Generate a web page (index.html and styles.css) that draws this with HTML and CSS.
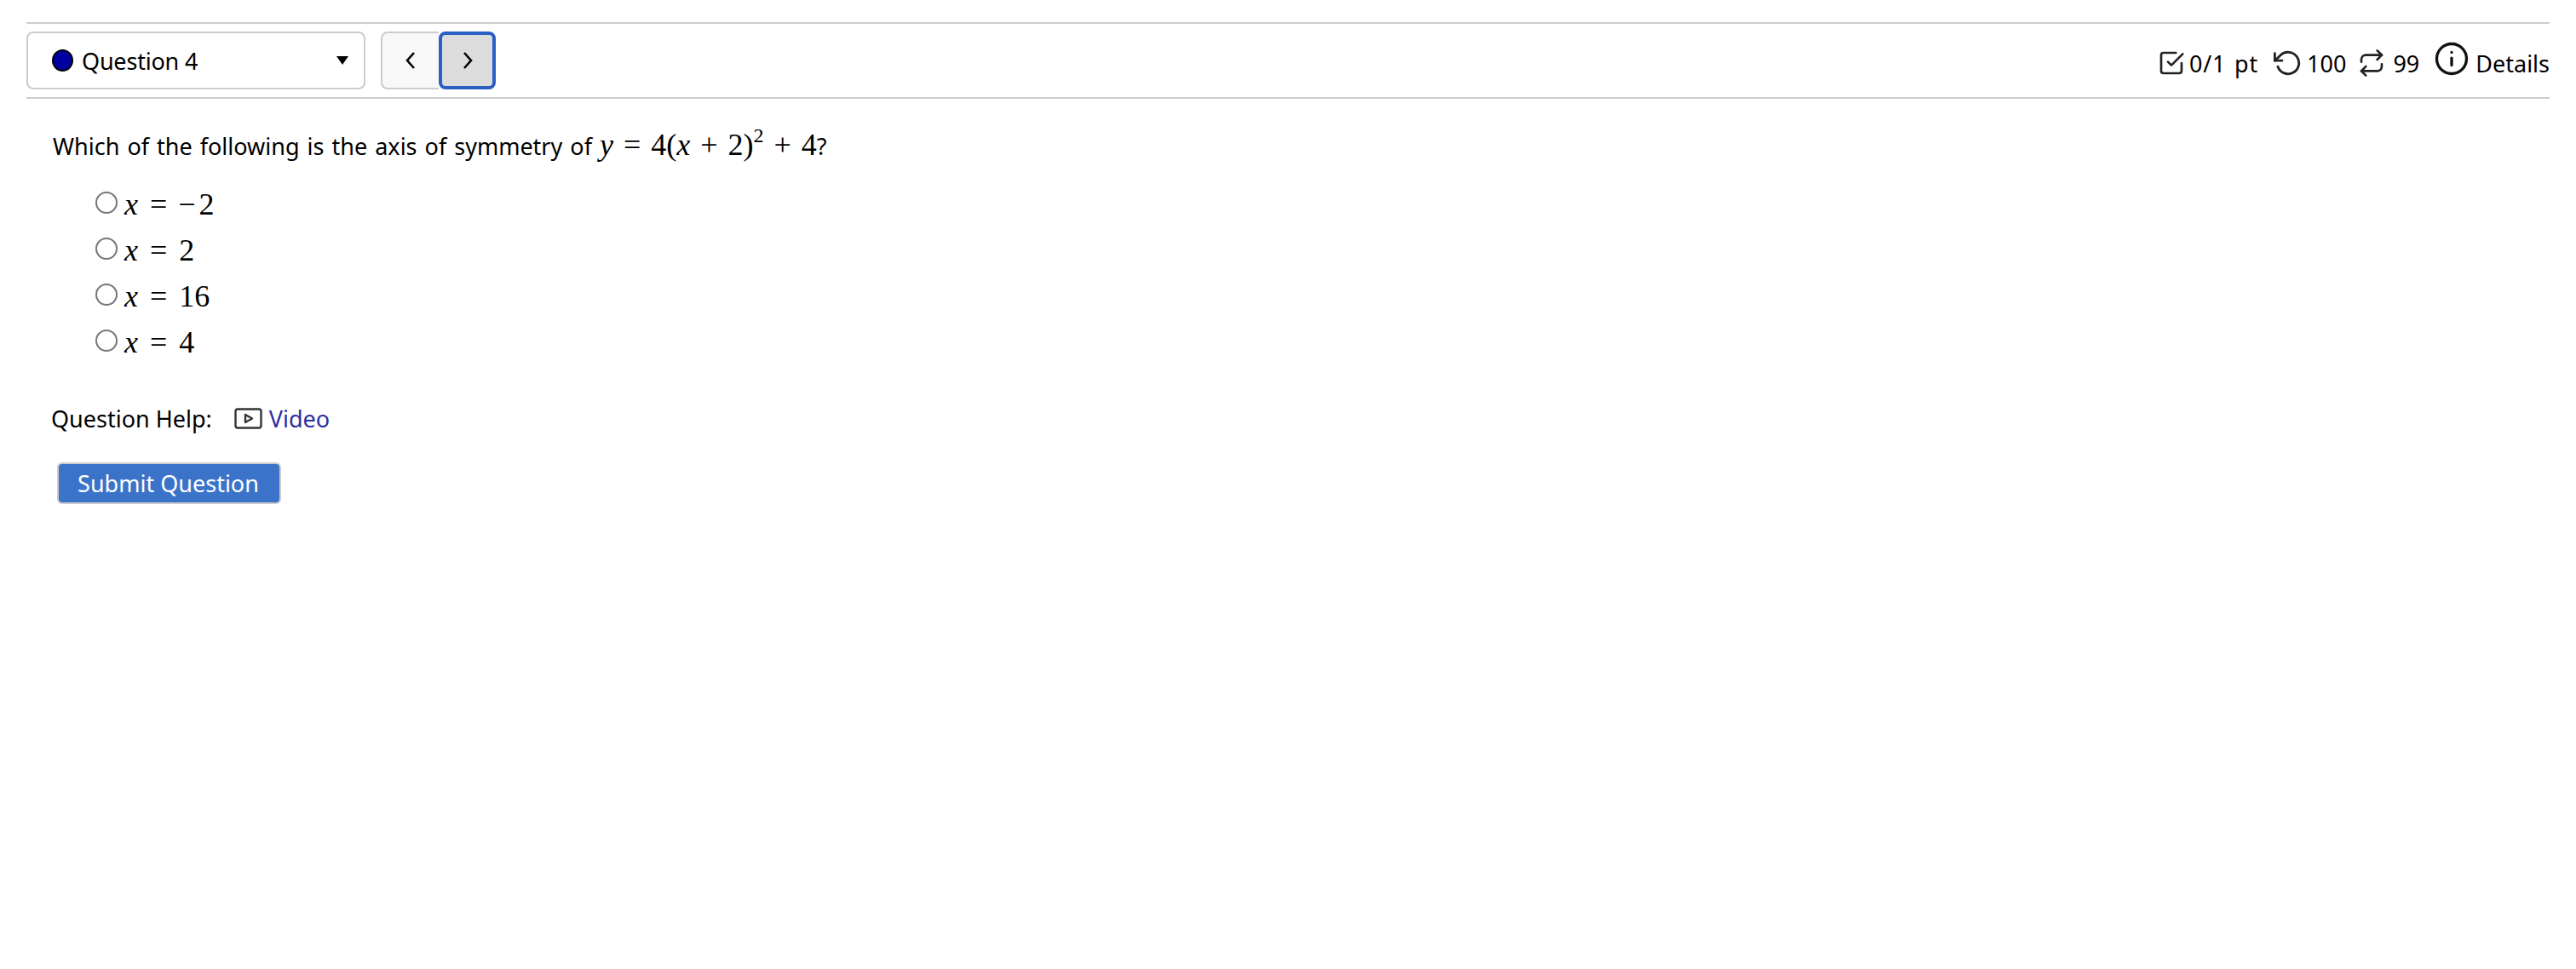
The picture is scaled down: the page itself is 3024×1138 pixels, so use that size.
FILE: index.html
```html
<!DOCTYPE html>
<html lang="en">
<head>
    <meta charset="UTF-8">
    <title>Question 4</title>
    <link rel="stylesheet" href="styles.css">
</head>
<body>
    <div class="question-nav">
        <div class="nav-left">
            <div class="question-select">
                <span class="status-dot"></span>
                <span class="select-label">Question 4</span>
                <span class="select-caret"></span>
            </div>
            <div class="nav-buttons">
                <button class="nav-btn nav-prev">
                    <svg width="16" height="24" viewBox="0 0 16 24"><path d="M12 3 L4 12 L12 21" fill="none" stroke="#000" stroke-width="2.6"/></svg>
                </button>
                <button class="nav-btn nav-next">
                    <svg width="16" height="24" viewBox="0 0 16 24"><path d="M4 3 L12 12 L4 21" fill="none" stroke="#000" stroke-width="2.6"/></svg>
                </button>
            </div>
        </div>
        <div class="nav-info">
            <svg class="icon" width="32" height="32" viewBox="0 0 24 24" fill="none" stroke="#222" stroke-width="2" stroke-linecap="round" stroke-linejoin="round">
                <polyline points="9 11 12 14 22 4"/>
                <path d="M21 12v7a2 2 0 0 1-2 2H5a2 2 0 0 1-2-2V5a2 2 0 0 1 2-2h11"/>
            </svg>
            <span class="info-text info-pts">0/1 pt</span>
            <svg class="icon" width="34" height="34" viewBox="0 0 24 24" fill="none" stroke="#222" stroke-width="2" stroke-linecap="round" stroke-linejoin="round">
                <polyline points="1 4 1 10 7 10"/>
                <path d="M3.51 15a9 9 0 1 0 2.13-9.36L1 10"/>
            </svg>
            <span class="info-text info-tries">100</span>
            <svg class="icon" width="32" height="34" viewBox="0 0 24 24" fill="none" stroke="#222" stroke-width="2" stroke-linecap="round" stroke-linejoin="round">
                <polyline points="17 1 21 5 17 9"/>
                <path d="M3 11V9a4 4 0 0 1 4-4h14"/>
                <polyline points="7 23 3 19 7 15"/>
                <path d="M21 13v2a4 4 0 0 1-4 4H3"/>
            </svg>
            <span class="info-text info-retries">99</span>
            <svg class="icon-info" width="40" height="40" viewBox="0 0 24 24" fill="none" stroke="#111" stroke-width="2" stroke-linecap="round">
                <circle cx="12" cy="12" r="10.5"/>
                <line x1="12" y1="16.5" x2="12" y2="11.5"/>
                <line x1="12" y1="7.5" x2="12.01" y2="7.5"/>
            </svg>
            <span class="info-text">Details</span>
        </div>
    </div>

    <div class="question-body">
        <p class="question-text">Which of the following is the axis of symmetry of
            <span class="math"><i>y</i> <span class="op">=</span> 4(<i>x</i> <span class="op">+</span> 2)<sup>2</sup> <span class="op">+</span> 4</span>?</p>

        <ul class="choices">
            <li><span class="radio"></span><span class="math"><i>x</i> <span class="op">=</span> <span class="minus">−</span>2</span></li>
            <li><span class="radio"></span><span class="math"><i>x</i> <span class="op">=</span> 2</span></li>
            <li><span class="radio"></span><span class="math"><i>x</i> <span class="op">=</span> 16</span></li>
            <li><span class="radio"></span><span class="math"><i>x</i> <span class="op">=</span> 4</span></li>
        </ul>

        <div class="question-help">
            <span>Question Help:</span>
            <svg class="video-icon" width="33" height="25" viewBox="0 0 33 25" fill="none" stroke="#333" stroke-width="2.4" stroke-linejoin="round">
                <rect x="1.5" y="1.5" width="30" height="22" rx="2.5"/>
                <path d="M13 8 L21 12.5 L13 17 Z"/>
            </svg>
            <a class="help-link" href="#">Video</a>
        </div>

        <button class="submit-btn">Submit Question</button>
    </div>
</body>
</html>
```

FILE: styles.css
```css
:root {
    --line-color: #cccccc;
    --link-color: #2e2e9e;
    --submit-color: #3b73c9;
}

body {
    font-family: "Noto Sans", "Open Sans", sans-serif;
    margin: 0;
    padding: 26px 31px 0;
    color: #000;
    font-size: 27px;
    background: #fff;
    min-height: 1112px;
}

.question-nav {
    display: flex;
    justify-content: space-between;
    align-items: center;
    height: 86px;
    border-top: 2px solid var(--line-color);
    border-bottom: 2px solid var(--line-color);
}

.nav-left {
    display: flex;
    align-items: center;
    gap: 18px;
}

.question-select {
    display: flex;
    align-items: center;
    box-sizing: border-box;
    width: 398px;
    height: 68px;
    padding: 0 18px 0 28px;
    border: 2px solid var(--line-color);
    border-radius: 8px;
}

.status-dot {
    box-sizing: border-box;
    width: 25px;
    height: 26px;
    border-radius: 50%;
    background: #0000a0;
    border: 2px solid #000;
    margin-right: 10px;
}

.select-label {
    flex: 1;
    letter-spacing: -0.2px;
}

.select-caret {
    width: 0;
    height: 0;
    border-left: 7px solid transparent;
    border-right: 7px solid transparent;
    border-top: 10px solid #000;
}

.nav-buttons {
    display: flex;
}

.nav-btn {
    display: flex;
    align-items: center;
    justify-content: center;
    box-sizing: border-box;
    height: 68px;
    padding: 0;
    background: #f8f8f8;
    border: 2px solid var(--line-color);
}

.nav-prev {
    width: 68px;
    border-right: 0;
    border-radius: 8px 0 0 8px;
}

.nav-next {
    width: 67px;
    background: #dcdcdc;
    border: 4px solid #2a5fc4;
    border-radius: 8px;
}

.nav-info {
    display: flex;
    align-items: center;
    padding-top: 6px;
}

.icon {
    margin-right: 5px;
}

.info-pts {
    margin-right: 18px;
    word-spacing: 2px;
    letter-spacing: 0.8px;
}

.info-tries {
    margin-right: 14px;
}

.info-retries {
    margin: 0 18px 0 4px;
}

.icon-info {
    margin: -10px 8px 0 0;
}

.question-body {
    padding-left: 31px;
}

.question-text {
    margin: 0;
    padding-top: 28px;
    line-height: 52px;
    word-spacing: 2px;
}

.math {
    font-family: "Liberation Serif", serif;
    font-size: 36px;
    word-spacing: 0;
}

.question-text .math {
    word-spacing: -2px;
}

.math sup {
    font-size: 24px;
    line-height: 0;
    vertical-align: 15px;
}

.op {
    margin: 0 5px;
}

.minus {
    margin: 0 4px 0 -1px;
}

.choices {
    list-style: none;
    margin: 15px 0 0;
    padding: 0 0 0 50px;
}

.choices li {
    display: flex;
    align-items: center;
    height: 54px;
}

.radio {
    box-sizing: border-box;
    width: 26px;
    height: 26px;
    border: 2px solid #767676;
    border-radius: 50%;
    margin-right: 8px;
    margin-top: -4px;
}

.question-help {
    display: flex;
    align-items: center;
    margin-top: 44px;
    margin-left: -2px;
}

.video-icon {
    margin: 0 8px 0 26px;
}

.help-link {
    color: var(--link-color);
    text-decoration: none;
}

.submit-btn {
    display: block;
    box-sizing: border-box;
    width: 263px;
    height: 49px;
    margin: 33px 0 0 5px;
    padding: 0 2px 0 0;
    font-family: inherit;
    font-size: 27px;
    color: #fff;
    background: var(--submit-color);
    border: 2px solid var(--line-color);
    border-radius: 6px;
}
```
